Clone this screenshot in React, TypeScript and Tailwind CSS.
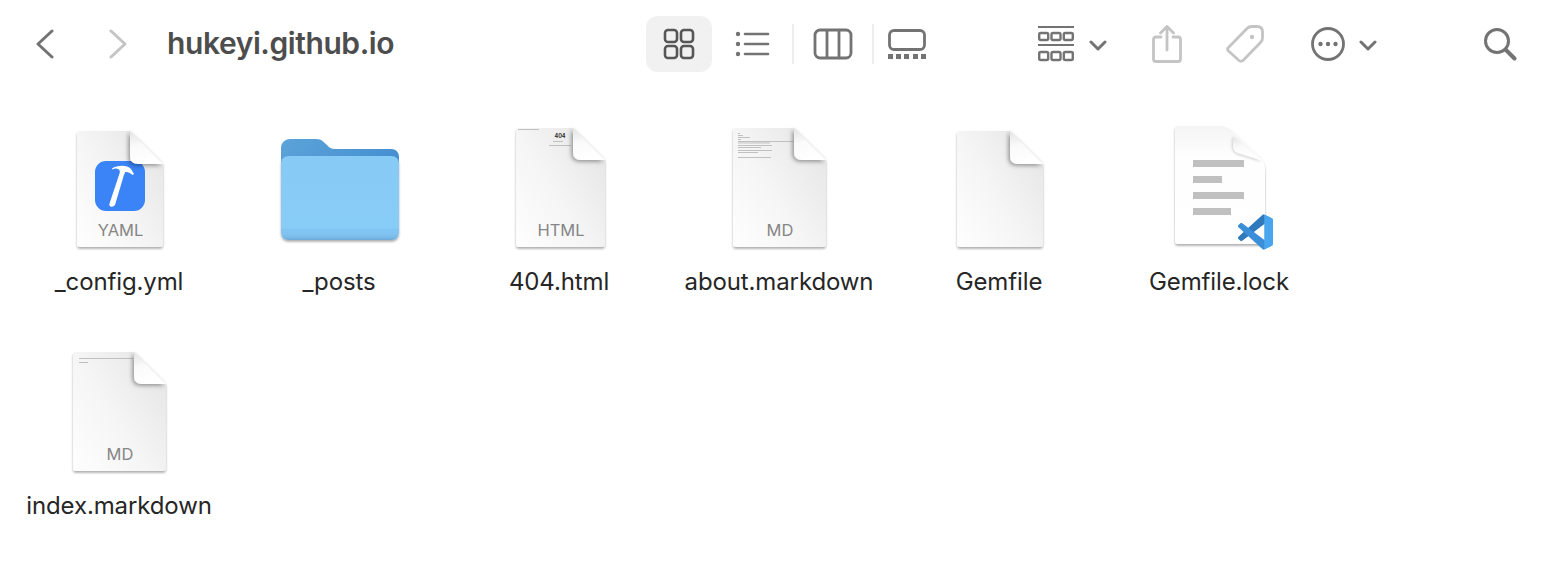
const FONT = "font-['Inter','Noto_Sans',sans-serif]";

const dark = "#737373";
const faint = "#c4c4c4";

function SharedDefs() {
  return (
    <svg className="block h-0 w-0" aria-hidden="true">
      <defs>
        <linearGradient id="page" x1="0" y1="1" x2="1" y2="0.2">
          <stop offset="0" stopColor="#fefefe" />
          <stop offset="0.5" stopColor="#f5f5f5" />
          <stop offset="1" stopColor="#e6e6e6" />
        </linearGradient>
        <linearGradient id="fold" x1="0.3" y1="1" x2="0.1" y2="0">
          <stop offset="0" stopColor="#ffffff" />
          <stop offset="0.55" stopColor="#fafafa" />
          <stop offset="1" stopColor="#e4e4e4" />
        </linearGradient>
        <linearGradient id="lockPage" x1="0" y1="0" x2="0" y2="1">
          <stop offset="0" stopColor="#f4f4f4" />
          <stop offset="0.25" stopColor="#fefefe" />
          <stop offset="1" stopColor="#ffffff" />
        </linearGradient>
        <linearGradient id="folderBack" x1="0" y1="0" x2="1" y2="0.2">
          <stop offset="0" stopColor="#5ba3d8" />
          <stop offset="1" stopColor="#4690d2" />
        </linearGradient>
        <linearGradient id="folderFront" x1="0" y1="0" x2="0" y2="1">
          <stop offset="0" stopColor="#87caf6" />
          <stop offset="0.86" stopColor="#88ccf8" />
          <stop offset="0.87" stopColor="#82c6f3" />
          <stop offset="0.93" stopColor="#80c3f0" />
          <stop offset="0.97" stopColor="#79b9e6" />
          <stop offset="1" stopColor="#6aa8d8" />
        </linearGradient>
        <filter id="pageShadow" x="-10%" y="-10%" width="120%" height="120%">
          <feDropShadow dx="0" dy="1.8" stdDeviation="1" floodColor="#000" floodOpacity="0.32" />
        </filter>
        <filter id="foldShadow" x="-40%" y="-40%" width="180%" height="180%">
          <feDropShadow dx="-1.5" dy="1.5" stdDeviation="2" floodColor="#000" floodOpacity="0.4" />
        </filter>
        <filter id="lockFoldShadow" x="-40%" y="-40%" width="180%" height="180%">
          <feDropShadow dx="-0.5" dy="1" stdDeviation="1.5" floodColor="#000" floodOpacity="0.22" />
        </filter>
      </defs>
    </svg>
  );
}

function Slot({ children }: { children: React.ReactNode }) {
  return (
    <svg width="140" height="128" viewBox="0 0 140 128" className="block">
      {children}
    </svg>
  );
}

function DocIcon({
  x,
  y,
  w,
  h,
  fold = 33,
  label,
  children,
}: {
  x: number;
  y: number;
  w: number;
  h: number;
  fold?: number;
  label?: string;
  children?: React.ReactNode;
}) {
  const r = 3;
  const fx = x + w - fold;
  return (
    <Slot>
      <path
        d={`M${x + r} ${y}H${fx}L${x + w} ${y + fold}V${y + h - r}Q${x + w} ${y + h} ${x + w - r} ${y + h}H${x + r}Q${x} ${y + h} ${x} ${y + h - r}V${y + r}Q${x} ${y} ${x + r} ${y}Z`}
        fill="url(#page)"
        filter="url(#pageShadow)"
      />
      {children}
      <path
        d={`M${fx} ${y}L${x + w} ${y + fold}H${fx + 8}Q${fx} ${y + fold} ${fx} ${y + fold - 8}Z`}
        fill="url(#fold)"
        filter="url(#foldShadow)"
      />
      {label && (
        <text
          x={x + w / 2 + 0.5}
          y={y + h - 11}
          textAnchor="middle"
          fontSize="16.500"
          fill="#868686"
          fontFamily="Inter, sans-serif"
        >
          {label}
        </text>
      )}
    </Slot>
  );
}

function HammerBadge() {
  return (
    <g>
      <rect x="46" y="37" width="50" height="50" rx="11" fill="#3a84f7" />
      <path d="M60.500 79.500L71 48L75.500 49L66 81Q64 83.500 61.500 82.500Q59.500 81.500 60.500 79.500Z" fill="#fff" />
      <path d="M63 44.500C68 41 78 40.500 82 45L85 50L83.500 51C81 48.500 78 47.500 76 48L75.500 50L71 49L70.500 46C68.500 44.500 66 44 63.500 45.500Z" fill="#fff" />
    </g>
  );
}

function ThumbLines({ lines }: { lines: [number, number, number][] }) {
  return (
    <g fill="#bababa">
      {lines.map(([x, y, w], i) => (
        <rect key={i} x={x} y={y} width={w} height="0.9" />
      ))}
    </g>
  );
}

function FolderIcon() {
  return (
    <Slot>
      <path
        d="M12 24c0-5 4-9 9-9h26c3 0 5 .7 7 2.500l4 3.500c2 2.500 4.500 4 8 4h56c5 0 8 3.500 8 8V50H12Z"
        fill="url(#folderBack)"
      />
      <path
        d="M12 40c0-5 3-8 8-8h102c5 0 8 3 8 8v68c0 5-3 8-8 8H20c-5 0-8-3-8-8Z"
        fill="url(#folderFront)"
        filter="url(#pageShadow)"
      />
    </Slot>
  );
}

function LockIcon() {
  return (
    <Slot>
      <path
        d="M29 2H70C78 2 83 6 88 11L104 26C112 33 116 38 116 46V120H29Q26 120 26 117V5Q26 2 29 2Z"
        fill="url(#lockPage)"
        filter="url(#pageShadow)"
      />
      <path
        d="M84 12L113 36.500L92 30Q84 29 84 21Z"
        fill="url(#fold)"
        filter="url(#lockFoldShadow)"
      />
      <g fill="#c0c0c0">
        <rect x="44" y="36" width="51" height="7" />
        <rect x="44" y="52" width="29" height="7" />
        <rect x="44" y="68" width="51" height="7" />
        <rect x="44" y="84" width="38" height="7" />
      </g>
      <svg x="89" y="90" width="35" height="36" viewBox="0 0 100 100">
        <path
          d="M96.461 10.796 75.857.876C73.472-.273 70.622.212 68.750 2.083L1.299 63.583c-1.815 1.654-1.813 4.511.004 6.162l5.510 5.009c1.485 1.350 3.722 1.450 5.321.236l81.227-61.620C96.086 11.303 100 13.246 100 16.667v-.240c0-2.401-1.375-4.590-3.539-5.631Z"
          fill="#2f79bd"
        />
        <path
          d="M96.461 89.204 75.857 99.125c-2.385 1.148-5.235.663-7.107-1.208L1.299 36.417c-1.815-1.654-1.813-4.511.004-6.162l5.510-5.009c1.485-1.350 3.722-1.450 5.321-.236l81.227 61.621c2.725 2.067 6.639.124 6.639-3.298v.239c0 2.401-1.375 4.590-3.539 5.632Z"
          fill="#3b8fd9"
        />
        <path
          d="M75.858 99.126c-2.386 1.148-5.236.663-7.108-1.209C71.056 100.223 75 98.590 75 95.328V4.672c0-3.262-3.944-4.895-6.250-2.589C70.622.211 73.472-.274 75.858.874l20.601 9.907C98.623 11.822 100 14.011 100 16.413v67.174c0 2.402-1.377 4.592-3.541 5.633L75.858 99.126Z"
          fill="#49a5ee"
        />
      </svg>
    </Slot>
  );
}

function Chevron({ color, flip }: { color: string; flip?: boolean }) {
  return (
    <svg width="18" height="30" viewBox="0 0 18 30" fill="none" className="block">
      <path
        d={flip ? "M2 2L16 15L2 28" : "M16 2L2 15L16 28"}
        stroke={color}
        strokeWidth="3"
        strokeLinecap="round"
        strokeLinejoin="round"
      />
    </svg>
  );
}

function SmallChevron({ className }: { className?: string }) {
  return (
    <svg width="18" height="11" viewBox="0 0 18 11" fill="none" className={className}>
      <path d="M2 2L9 9L16 2" stroke={dark} strokeWidth="3" strokeLinecap="round" strokeLinejoin="round" />
    </svg>
  );
}

function Toolbar() {
  return (
    <div className="flex h-[88px] items-center pl-[36px]">
      <Chevron color={dark} />
      <div className="ml-[55px]">
        <Chevron color={faint} flip />
      </div>
      <h1 className={`ml-[40px] mb-[2px] w-[227px] text-[30px] leading-[36px] font-semibold tracking-[-0.42px] whitespace-nowrap text-[#4d4d4d] ${FONT}`}>
        hukeyi.github.io
      </h1>

      {/* view switcher */}
      <div className="ml-[252px] flex h-[56px] w-[66px] items-center justify-center rounded-xl bg-[#f1f1f1]">
        <svg width="32" height="32" viewBox="0 0 32 32" fill="none" stroke="#575757" strokeWidth="2.600">
          <rect x="2" y="2" width="12" height="12" rx="3" />
          <rect x="18" y="2" width="12" height="12" rx="3" />
          <rect x="2" y="18" width="12" height="12" rx="3" />
          <rect x="18" y="18" width="12" height="12" rx="3" />
        </svg>
      </div>
      <svg width="36" height="26" viewBox="0 0 36 26" fill="none" className="ml-[22px]">
        <g fill={dark}>
          <circle cx="4" cy="3" r="2.200" />
          <circle cx="4" cy="13" r="2.200" />
          <circle cx="4" cy="23" r="2.200" />
        </g>
        <path d="M11 3H34M11 13H34M11 23H34" stroke={dark} strokeWidth="2.600" strokeLinecap="round" />
      </svg>
      <div className="ml-[22px] h-[40px] w-[2px] bg-[#eeeeee]" />
      <svg width="40" height="32" viewBox="0 0 40 32" fill="none" stroke={dark} strokeWidth="2.800" className="ml-[19px]">
        <rect x="2" y="2" width="36" height="28" rx="5" />
        <path d="M14 2V30M26 2V30" />
      </svg>
      <div className="ml-[19px] h-[40px] w-[2px] bg-[#eeeeee]" />
      <svg width="38" height="30" viewBox="0 0 38 30" fill="none" className="ml-[14px]">
        <rect x="1.500" y="1.500" width="35" height="19" rx="4.500" stroke={dark} strokeWidth="2.800" />
        <g fill={dark}>
          <rect x="0" y="25" width="5" height="5" />
          <rect x="8" y="25" width="5" height="5" />
          <rect x="16" y="25" width="5" height="5" />
          <rect x="25" y="25" width="5" height="5" />
          <rect x="33" y="25" width="5" height="5" />
        </g>
      </svg>

      {/* group by */}
      <svg width="36" height="36" viewBox="0 0 36 36" fill="none" className="ml-[112px]">
        <path d="M0 1H36M0 19H36" stroke={dark} strokeWidth="2" />
        <g stroke={dark} strokeWidth="2.400">
          <rect x="1.200" y="7" width="9" height="7" rx="1.500" />
          <rect x="13.500" y="7" width="9" height="7" rx="1.500" />
          <rect x="25.800" y="7" width="9" height="7" rx="1.500" />
          <rect x="1.200" y="26" width="9" height="8" rx="1.500" />
          <rect x="13.500" y="26" width="9" height="8" rx="1.500" />
          <rect x="25.800" y="26" width="9" height="8" rx="1.500" />
        </g>
      </svg>
      <SmallChevron className="ml-[15px] mt-[2px]" />

      {/* share */}
      <svg width="30" height="38" viewBox="0 0 30 38" fill="none" stroke={faint} strokeWidth="2.800" strokeLinecap="round" strokeLinejoin="round" className="ml-[45px]">
        <path d="M9 12H4Q1.500 12 1.500 14.500V34Q1.500 36.500 4 36.500H26Q28.500 36.500 28.500 34V14.500Q28.500 12 26 12H21" />
        <path d="M15 25V2M8.500 8L15 1.500L21.500 8" />
      </svg>

      {/* tag */}
      <svg width="38" height="38" viewBox="0 0 38 38" fill="none" className="ml-[44px]">
        <path
          d="M2 23L21 3.500Q23 1.500 25.500 1.500H31Q36.500 1.500 36.500 7V13Q36.500 15.500 34.500 17.500L17 35.500Q15 37 13 35.500L2 25.500Q1 24 2 23Z"
          stroke={faint}
          strokeWidth="2.800"
          strokeLinejoin="round"
        />
        <circle cx="26" cy="12" r="2.200" fill={faint} />
      </svg>

      {/* more */}
      <svg width="34" height="34" viewBox="0 0 34 34" fill="none" className="ml-[47px]">
        <circle cx="17" cy="17" r="15.500" stroke={dark} strokeWidth="2.800" />
        <g fill={dark}>
          <circle cx="9.500" cy="17" r="2.200" />
          <circle cx="17" cy="17" r="2.200" />
          <circle cx="24.500" cy="17" r="2.200" />
        </g>
      </svg>
      <SmallChevron className="ml-[14px] mt-[2px]" />

      {/* search */}
      <svg width="34" height="34" viewBox="0 0 34 34" fill="none" className="ml-[106px]">
        <circle cx="14" cy="14" r="11.500" stroke={dark} strokeWidth="3" />
        <path d="M23 23L31.500 31.500" stroke={dark} strokeWidth="4" strokeLinecap="round" />
      </svg>
    </div>
  );
}

function FileItem({ name, children }: { name: string; children: React.ReactNode }) {
  return (
    <div className="flex h-[224px] flex-col items-center">
      {children}
      <span className={`mt-[15px] text-[24px] leading-[30px] tracking-[-0.12px] whitespace-nowrap text-[#262626] ${FONT}`}>{name}</span>
    </div>
  );
}

export default function App() {
  return (
    <div className="h-screen overflow-hidden bg-white">
      <SharedDefs />
      <Toolbar />
      <div className="grid grid-cols-[repeat(6,220px)] pt-[36px] pl-[9px]">
        <FileItem name="_config.yml">
          <DocIcon x={28} y={7} w={86} h={116} fold={33} label="YAML">
            <HammerBadge />
          </DocIcon>
        </FileItem>
        <FileItem name="_posts">
          <FolderIcon />
        </FileItem>
        <FileItem name="404.html">
          <DocIcon x={27} y={4} w={89} h={119} fold={32} label="HTML">
            <text x="71" y="13.500" fontSize="5.500" fontWeight="700" textAnchor="middle" fill="#333" fontFamily="Inter, sans-serif">
              404
            </text>
            <ThumbLines lines={[[29, 5, 21], [64, 17, 10], [60, 21, 22]]} />
          </DocIcon>
        </FileItem>
        <FileItem name="about.markdown">
          <DocIcon x={24} y={4} w={93} h={119} fold={32} label="MD">
            <ThumbLines
              lines={[
                [29, 9, 2],
                [29, 11, 5],
                [29, 13, 12],
                [29, 15, 3],
                [29, 17, 55],
                [29, 18.500, 32],
                [29, 21, 34],
                [29, 23, 23],
                [29, 26, 34],
                [29, 28, 20],
                [29, 33, 33],
              ]}
            />
          </DocIcon>
        </FileItem>
        <FileItem name="Gemfile">
          <DocIcon x={28} y={7} w={86} h={116} fold={33} />
        </FileItem>
        <FileItem name="Gemfile.lock">
          <LockIcon />
        </FileItem>
        <FileItem name="index.markdown">
          <DocIcon x={24} y={4} w={93} h={119} fold={32} label="MD">
            <ThumbLines lines={[[30, 10, 54], [30, 14, 9]]} />
          </DocIcon>
        </FileItem>
      </div>
    </div>
  );
}
